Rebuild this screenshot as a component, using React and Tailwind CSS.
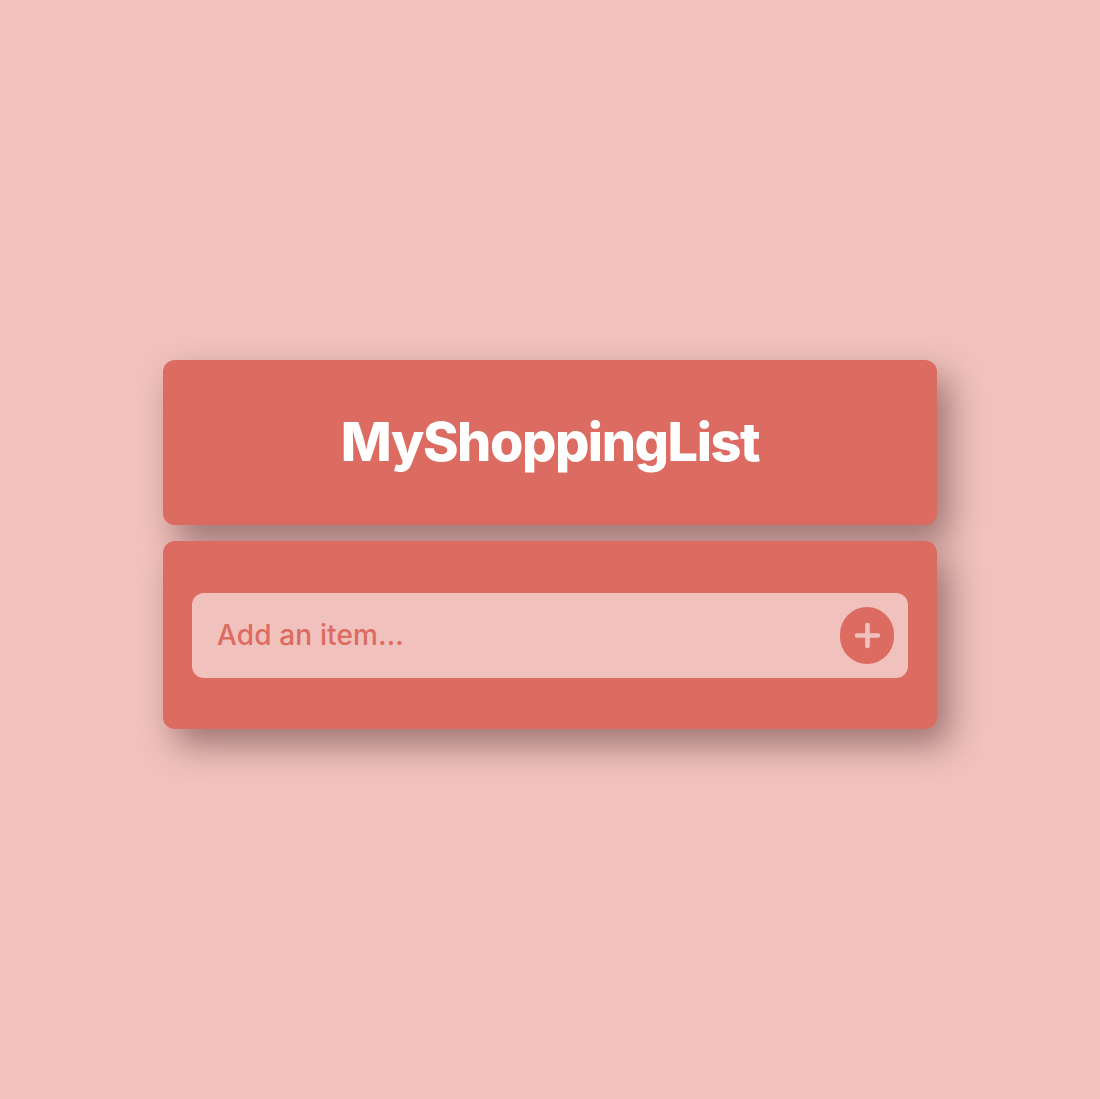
import { useState } from 'react';

const App = () => {
  const [item, setItem] = useState('');

  return (
    <div
      className="min-h-screen w-full bg-[#f1c2bd] flex items-center justify-center pb-[10px]"
      style={{ fontFamily: 'Inter, "Noto Sans", sans-serif' }}
    >
      <div className="w-[774px] flex flex-col gap-4">
        <div className="h-[165px] rounded-xl bg-[#dc6b61] flex items-center justify-center shadow-[12px_16px_34px_rgba(40,10,10,0.42)]">
          <h1 className="text-[54px] font-extrabold text-white tracking-[-0.027em] leading-none pb-[2px]">MyShoppingList</h1>
        </div>
        <div className="h-[188px] rounded-xl bg-[#dc6b61] px-[29px] flex items-center shadow-[12px_16px_34px_rgba(40,10,10,0.42)]">
          <div className="w-full h-[85px] rounded-xl bg-[#f1c2bd] flex items-center pl-[25px] pr-[14px]">
            <input
              value={item}
              onChange={(e) => setItem(e.target.value)}
              placeholder="Add an item..."
              className="flex-1 bg-transparent outline-none text-[28px] font-medium tracking-[0.005em] text-[#dc6b61] placeholder:text-[#dc6b61]"
            />
            <button className="w-[54px] h-[57px] rounded-full bg-[#dc6b61] flex items-center justify-center">
              <svg width="27" height="27" viewBox="0 0 26 26" fill="none" stroke="#f1c2bd" strokeWidth="4.5" strokeLinecap="round">
                <path d="M13 3v20M3 13h20" />
              </svg>
            </button>
          </div>
        </div>
      </div>
    </div>
  );
};

export default App;
